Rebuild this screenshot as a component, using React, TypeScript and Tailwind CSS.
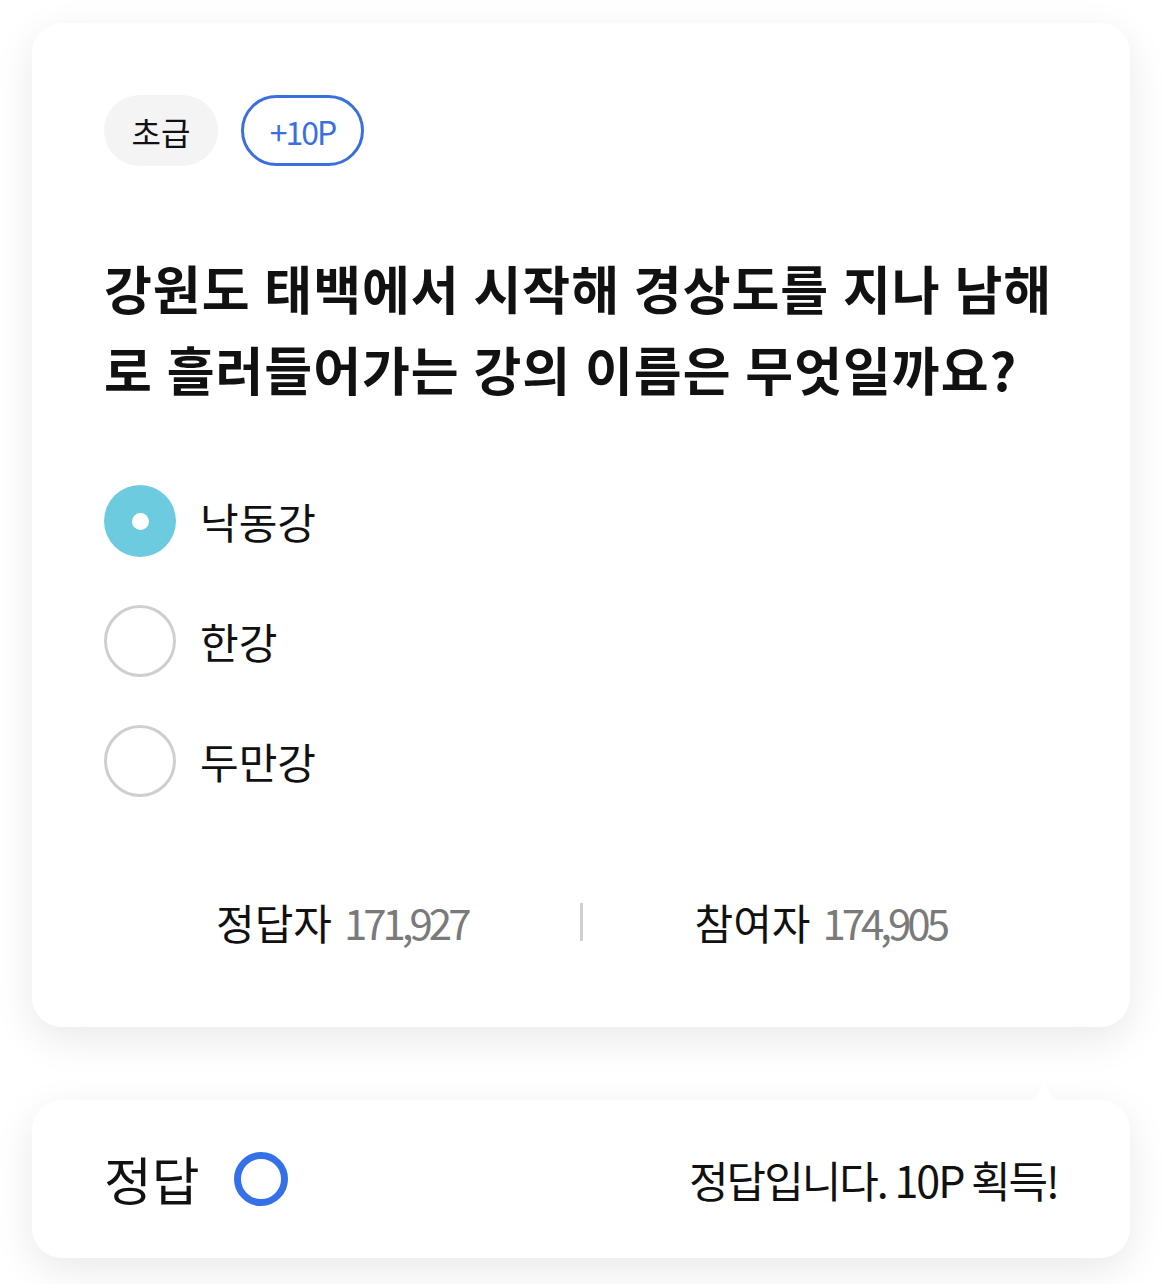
import React from "react";

const font = { fontFamily: '"Noto Sans CJK KR", "Noto Sans", sans-serif' };

function Radio({ checked }: { checked?: boolean }) {
  if (checked) {
    return (
      <div className="flex h-[72px] w-[72px] shrink-0 items-center justify-center rounded-full bg-[#6dcbdf]">
        <div className="h-[17px] w-[17px] rounded-full bg-white" />
      </div>
    );
  }
  return <div className="h-[72px] w-[72px] shrink-0 rounded-full border-[3px] border-[#cfcfcf] bg-white" />;
}

export default function App() {
  const options = [
    { label: "낙동강", checked: true },
    { label: "한강" },
    { label: "두만강" },
  ];
  return (
    <div className="min-h-[1284px] w-full bg-white pl-[32px] pr-[38px] pt-[23px] pb-[26px] text-black" style={font}>
      <div className="rounded-[30px] bg-white px-[72px] pt-[72px] pb-[80px] shadow-[0_12px_40px_rgba(0,0,0,0.09)]">
        <div className="flex items-center gap-[23px]">
          <div className="flex h-[71px] w-[114px] items-center justify-center rounded-full bg-[#f4f4f4] text-[32px] text-[#111]">
            초급
          </div>
          <div className="flex h-[71px] w-[123px] items-center justify-center rounded-full border-[3px] border-[#3a6fe0] text-[32px] tracking-[-2px] text-[#3a6fe0]">
            +10P
          </div>
        </div>
        <h1 className="mt-[81px] text-[52px] font-bold leading-[81px] tracking-[1px] [word-spacing:1px] text-[#111]">
          강원도 태백에서 시작해 경상도를 지나 남해로 흘러들어가는 강의 이름은 무엇일까요?
        </h1>
        <div className="mt-[76px] flex flex-col gap-[48px]">
          {options.map((o) => (
            <div key={o.label} className="flex items-center gap-[24px]">
              <Radio checked={o.checked} />
              <span className="text-[42px] leading-[50px] text-[#111]">{o.label}</span>
            </div>
          ))}
        </div>
        <div className="mt-[100px] flex items-center">
          <div className="flex flex-1 items-baseline justify-center gap-[12px] text-[42px] leading-[50px]">
            <span className="text-[#111]">정답자</span>
            <span className="tracking-[-4px] text-[#7a7a7a]">171,927</span>
          </div>
          <div className="h-[38px] w-[3px] bg-[#d0d0d0]" />
          <div className="flex flex-1 items-baseline justify-center gap-[12px] text-[42px] leading-[50px]">
            <span className="text-[#111]">참여자</span>
            <span className="tracking-[-4px] text-[#7a7a7a]">174,905</span>
          </div>
        </div>
      </div>
      <div className="relative mt-[73px] flex h-[158px] items-center justify-between rounded-[30px] bg-white px-[72px] shadow-[0_12px_40px_rgba(0,0,0,0.09)]">
        <svg
          className="absolute right-[69px] top-[-17px] h-[18px] w-[34px]"
          viewBox="0 0 34 18"
          fill="#ffffff"
        >
          <path d="M0 18 C6 18 10 14 14 6 C15.5 3 16 1 17 1 C18 1 18.5 3 20 6 C24 14 28 18 34 18 Z" />
        </svg>
        <div className="flex items-center gap-[34px]">
          <span className="text-[52px] leading-[60px] text-[#111]">정답</span>
          <div className="h-[54px] w-[54px] rounded-full border-[7px] border-[#3470e8]" />
        </div>
        <span className="text-[43px] leading-[50px] tracking-[-2px] text-[#111]">정답입니다. 10P 획득!</span>
      </div>
    </div>
  );
}
